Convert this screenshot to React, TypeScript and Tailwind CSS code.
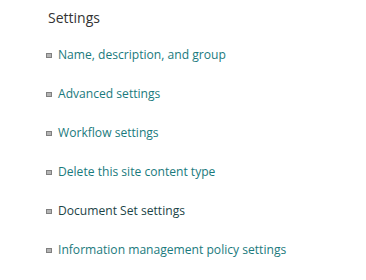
const items = [
  { label: 'Name, description, and group', dark: false },
  { label: 'Advanced settings', dark: false },
  { label: 'Workflow settings', dark: false },
  { label: 'Delete this site content type', dark: false },
  { label: 'Document Set settings', dark: true },
  { label: 'Information management policy settings', dark: false },
];

export default function App() {
  return (
    <div
      className="w-[366px] h-[280px] bg-white pl-[48px] pt-[9px]"
      style={{ fontFamily: '"Open Sans", "Noto Sans", sans-serif' }}
    >
      <h2 className="text-[14px] leading-[18px] text-[#333333]">Settings</h2>
      <ul className="mt-[19px] flex flex-col gap-[21px] -ml-[2px]">
        {items.map((it) => (
          <li key={it.label} className="flex items-center gap-[6px] h-[18px]">
            <span className="w-[6px] h-[5px] bg-[#b4b4b4] border border-[#808080] shrink-0" />
            <a
              href="#"
              className={
                'text-[12.1px] leading-[18px] ' +
                (it.dark ? 'text-[#1c4447]' : 'text-[#1a7a7d]')
              }
            >
              {it.label}
            </a>
          </li>
        ))}
      </ul>
    </div>
  );
}
